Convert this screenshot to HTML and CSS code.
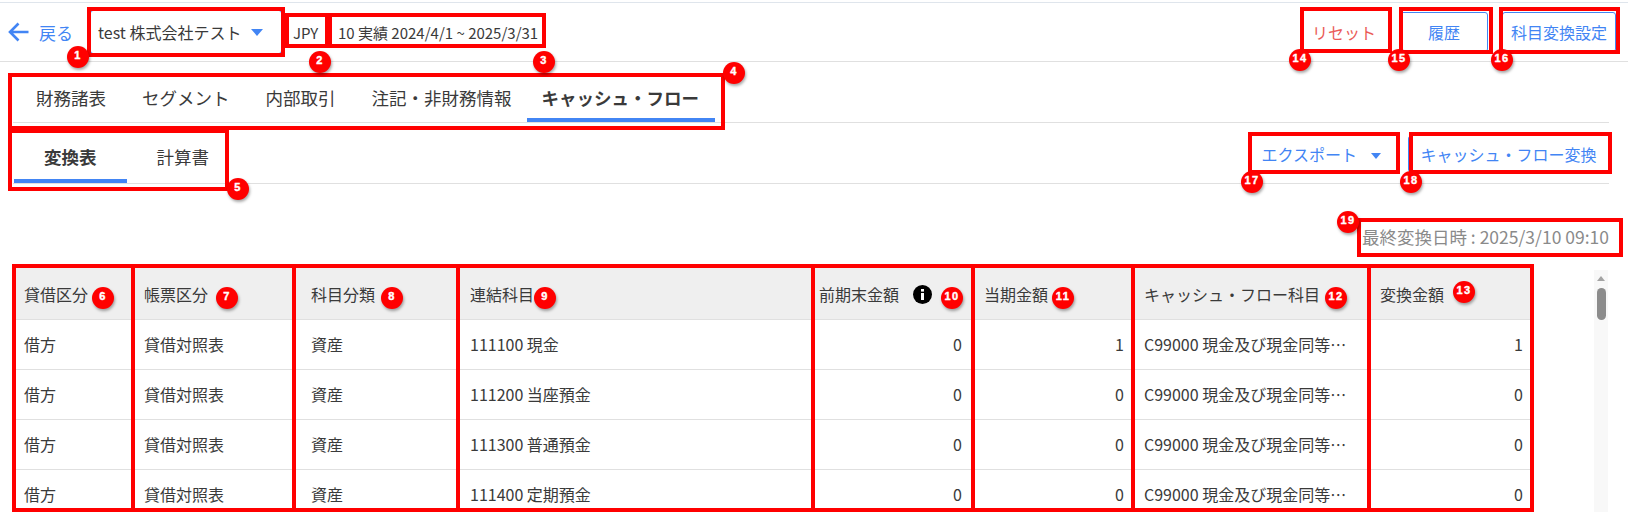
FILE: index.html
```html
<!DOCTYPE html>
<html lang="ja">
<head>
    <meta charset="UTF-8">
    <title>キャッシュ・フロー</title>
    <link rel="stylesheet" href="styles.css">
</head>
<body>
<div class="page">
    <header class="top-bar">
        <a class="back-link">
            <svg class="back-icon" width="21" height="20" viewBox="0 0 21 20"><path d="M20.5 10H2.5M10.5 1.5L2 10l8.5 8.5" fill="none" stroke="#4285f4" stroke-width="2.6"/></svg>
            戻る
        </a>
        <div class="company-select">test 株式会社テスト <span class="caret"></span></div>
        <div class="info-cell currency">JPY</div>
        <div class="info-cell period">10 実績 2024/4/1 ~ 2025/3/31</div>
        <div class="top-actions">
            <button class="btn btn-danger">リセット</button>
            <button class="btn btn-outline btn-history">履歴</button>
            <button class="btn btn-outline btn-mapping">科目変換設定</button>
        </div>
    </header>

    <nav class="tabs">
        <a class="tab">財務諸表</a>
        <a class="tab">セグメント</a>
        <a class="tab">内部取引</a>
        <a class="tab tab-before-active">注記・非財務情報</a>
        <a class="tab tab-active">キャッシュ・フロー</a>
    </nav>

    <div class="sub-tabs">
        <a class="sub-tab sub-tab-active">変換表</a>
        <a class="sub-tab">計算書</a>
        <div class="sub-actions">
            <button class="btn btn-export">エクスポート <span class="caret"></span></button>
            <button class="btn btn-convert">キャッシュ・フロー変換</button>
        </div>
    </div>

    <p class="last-run">最終変換日時 : 2025/3/10 09:10</p>

    <div class="table-area">
        <table class="cf-table">
            <colgroup>
                <col class="w-side"><col class="w-report"><col class="w-group"><col class="w-account">
                <col class="w-amount"><col class="w-amount"><col class="w-cf"><col class="w-total">
            </colgroup>
            <thead>
                <tr>
                    <th class="side-cell">貸借区分</th>
                    <th>帳票区分</th>
                    <th class="group-cell">科目分類</th>
                    <th class="account-cell">連結科目</th>
                    <th class="prev-head">前期末金額
                        <svg class="info-icon" width="19" height="19" viewBox="0 0 19 19"><circle cx="9.5" cy="9.5" r="9.5" fill="#000"/><rect x="8" y="8" width="3" height="7" fill="#fff"/><rect x="8" y="4" width="3" height="2.6" fill="#fff"/></svg>
                    </th>
                    <th>当期金額</th>
                    <th>キャッシュ・フロー科目</th>
                    <th>変換金額</th>
                </tr>
            </thead>
            <tbody>
                <tr>
                    <td class="side-cell">借方</td><td>貸借対照表</td><td class="group-cell">資産</td><td class="account-cell">111100 現金</td>
                    <td class="num">0</td><td class="num num-wide">1</td><td class="cf-name">C99000 現金及び現金同等物期首残高</td><td class="num num-wide">1</td>
                </tr>
                <tr>
                    <td class="side-cell">借方</td><td>貸借対照表</td><td class="group-cell">資産</td><td class="account-cell">111200 当座預金</td>
                    <td class="num">0</td><td class="num num-wide">0</td><td class="cf-name">C99000 現金及び現金同等物期首残高</td><td class="num num-wide">0</td>
                </tr>
                <tr>
                    <td class="side-cell">借方</td><td>貸借対照表</td><td class="group-cell">資産</td><td class="account-cell">111300 普通預金</td>
                    <td class="num">0</td><td class="num num-wide">0</td><td class="cf-name">C99000 現金及び現金同等物期首残高</td><td class="num num-wide">0</td>
                </tr>
                <tr>
                    <td class="side-cell">借方</td><td>貸借対照表</td><td class="group-cell">資産</td><td class="account-cell">111400 定期預金</td>
                    <td class="num">0</td><td class="num num-wide">0</td><td class="cf-name">C99000 現金及び現金同等物期首残高</td><td class="num num-wide">0</td>
                </tr>
            </tbody>
        </table>
        <div class="scroll-track">
            <span class="scroll-up"></span>
            <span class="scroll-thumb"></span>
        </div>
    </div>

    <!-- annotation layer drawn over the screen -->
    <div class="notes">
        <i class="box box-1"></i><i class="box box-2"></i><i class="box box-3"></i><i class="box box-4"></i>
        <i class="box box-5"></i><i class="box box-6"></i><i class="box box-7"></i><i class="box box-8"></i>
        <i class="box box-9"></i><i class="box box-10"></i><i class="box box-11"></i><i class="box box-12"></i>
        <i class="box box-13"></i><i class="box box-14"></i><i class="box box-15"></i><i class="box box-16"></i>
        <i class="box box-17"></i><i class="box box-18"></i><i class="box box-19"></i>

        <b class="badge badge-1">1</b><b class="badge badge-2">2</b><b class="badge badge-3">3</b><b class="badge badge-4">4</b>
        <b class="badge badge-5">5</b><b class="badge badge-6">6</b><b class="badge badge-7">7</b><b class="badge badge-8">8</b>
        <b class="badge badge-9">9</b><b class="badge badge-10">10</b><b class="badge badge-11">11</b><b class="badge badge-12">12</b>
        <b class="badge badge-13">13</b><b class="badge badge-14">14</b><b class="badge badge-15">15</b><b class="badge badge-16">16</b>
        <b class="badge badge-17">17</b><b class="badge badge-18">18</b><b class="badge badge-19">19</b>
    </div>
</div>
</body>
</html>
```

FILE: styles.css
```css
html, body {
    margin: 0;
    padding: 0;
    background-color: #fff;
}

.page {
    position: relative;
    width: 1628px;
    height: 512px;
    overflow: hidden;
    padding-top: 2px;
    box-sizing: border-box;
    font-family: "Noto Sans CJK JP", "Noto Sans", sans-serif;
    font-size: 16px;
    color: #3a3a3a;
}

/* Top bar */
.top-bar {
    display: flex;
    align-items: center;
    height: 58px;
    padding: 0 12px 0 8px;
    border-top: 1px solid #dfe5ec;
    border-bottom: 1px solid #e0e0e0;
}

.back-link {
    display: flex;
    align-items: center;
    gap: 10px;
    width: 82px;
    font-size: 17px;
    color: #4285f4;
}

.company-select {
    display: flex;
    align-items: center;
    box-sizing: border-box;
    width: 192px;
    height: 44px;
    padding-left: 7px;
    border: 1px solid #4285f4;
    border-radius: 3px;
    white-space: pre;
}

.caret {
    display: inline-block;
    width: 0;
    height: 0;
    margin-left: 6px;
    border-left: 6px solid transparent;
    border-right: 6px solid transparent;
    border-top: 7px solid #4285f4;
}

.info-cell {
    font-size: 15px;
}

.currency {
    width: 34px;
    padding-left: 11px;
}

.period {
    padding-left: 11px;
}

.top-actions {
    display: flex;
    gap: 14px;
    margin-left: auto;
}

.btn {
    box-sizing: border-box;
    height: 40px;
    background: #fff;
    border: 1px solid transparent;
    border-radius: 3px;
    font-family: inherit;
    font-size: 16px;
    padding: 0;
    color: #4285f4;
}

.btn-danger {
    width: 84px;
    color: #ea5b57;
}

.btn-outline {
    border-color: #4285f4;
}

.btn-history {
    width: 88px;
}

.btn-mapping {
    width: 114px;
}

/* Tabs */
.tabs {
    display: flex;
    width: 1596px;
    margin: 13px 0 0 13px;
    border-bottom: 1px solid #e0e0e0;
}

.tab {
    box-sizing: border-box;
    height: 47px;
    padding: 0 18px;
    line-height: 45px;
    font-size: 17.5px;
}

.tab:first-child {
    padding-left: 23px;
}

.tab-before-active {
    padding-right: 15px;
}

.tab-active {
    padding: 0 16px 0 15px;
    font-weight: 700;
    border-bottom: 4px solid #4285f4;
}

.sub-tabs {
    display: flex;
    align-items: flex-end;
    width: 1596px;
    height: 60px;
    margin-left: 13px;
    border-bottom: 1px solid #e0e0e0;
}

.sub-tab {
    box-sizing: border-box;
    height: 48px;
    padding: 0 30px;
    line-height: 44px;
    font-size: 17.5px;
}

.sub-tab-active {
    margin-left: 1px;
    font-weight: 700;
    border-bottom: 4px solid #4285f4;
}

.sub-actions {
    display: flex;
    gap: 12px;
    margin: 0 0 11px auto;
}

.btn-export {
    width: 144px;
    height: 36px;
    padding-right: 6px;
}

.btn-export .caret {
    margin-left: 10px;
    vertical-align: 2px;
    border-left-width: 5px;
    border-right-width: 5px;
    border-top-width: 6px;
}

.btn-convert {
    width: 201px;
    height: 36px;
    border-left-color: #4285f4;
}

.last-run {
    margin: 41px 19px 0 0;
    height: 24px;
    line-height: 24px;
    font-size: 17.5px;
    text-align: right;
    color: #8a8a8a;
}

/* Table */
.table-area {
    display: flex;
    margin-top: 18px;
    padding-left: 14px;
    height: 245px;
}

.cf-table {
    width: 1518px;
    height: 0;
    border-collapse: collapse;
    table-layout: fixed;
    font-size: 16px;
}

.w-side { width: 119px; }
.w-report { width: 161px; }
.w-group { width: 164px; }
.w-account { width: 355px; }
.w-amount { width: 160px; }
.w-cf { width: 236px; }
.w-total { width: 163px; }

.cf-table th, .cf-table td {
    box-sizing: border-box;
    padding: 0 11px;
    text-align: left;
    font-weight: 400;
    white-space: nowrap;
    overflow: hidden;
    border-bottom: 1px solid #e0e0e0;
}

.cf-table th {
    height: 52px;
    padding-top: 2px;
    background-color: #efefef;
}

.cf-table td {
    height: 50px;
}

.cf-table .side-cell {
    padding-left: 10px;
}

.cf-table .group-cell {
    padding-left: 17px;
}

.cf-table .account-cell {
    padding-left: 12px;
}

.cf-table .prev-head {
    padding-left: 6px;
}

.info-icon {
    margin-left: 10px;
    vertical-align: -3px;
}

.cf-table .num {
    text-align: right;
}

.cf-table .num-wide {
    padding-right: 9px;
}

.cf-table .cf-name {
    text-overflow: ellipsis;
    padding-right: 20px;
}

/* Scrollbar */
.scroll-track {
    position: relative;
    box-sizing: border-box;
    width: 14px;
    margin: 3px 0 0 62px;
    padding-top: 6px;
    background-color: #f8f8f8;
}

.scroll-up {
    display: block;
    width: 0;
    height: 0;
    margin: 0 auto;
    border-left: 4.5px solid transparent;
    border-right: 4.5px solid transparent;
    border-bottom: 5px solid #a3a3a3;
}

.scroll-thumb {
    display: block;
    width: 9px;
    height: 32px;
    margin: 7px auto 0;
    background-color: #8c8c8c;
    border-radius: 5px;
}

/* Annotations */
.notes {
    position: absolute;
    top: 0;
    left: 0;
    width: 100%;
    height: 100%;
}

.box {
    position: absolute;
    box-sizing: border-box;
    border: 4px solid #f00;
}

.box-1 { left: 87px; top: 7px; width: 198px; height: 50px; }
.box-2 { left: 285px; top: 13px; width: 44px; height: 35px; }
.box-3 { left: 328px; top: 13px; width: 218px; height: 35px; }
.box-4 { left: 8px; top: 73px; width: 717px; height: 57px; }
.box-5 { left: 8px; top: 129px; width: 221px; height: 62px; }
.box-6 { left: 12px; top: 264px; width: 123px; height: 248px; }
.box-7 { left: 131px; top: 264px; width: 165px; height: 248px; }
.box-8 { left: 292px; top: 264px; width: 168px; height: 248px; }
.box-9 { left: 456px; top: 264px; width: 359px; height: 248px; }
.box-10 { left: 811px; top: 264px; width: 164px; height: 248px; }
.box-11 { left: 971px; top: 264px; width: 164px; height: 248px; }
.box-12 { left: 1131px; top: 264px; width: 240px; height: 248px; }
.box-13 { left: 1367px; top: 264px; width: 167px; height: 248px; }
.box-14 { left: 1300px; top: 7px; width: 92px; height: 46px; }
.box-15 { left: 1399px; top: 7px; width: 94px; height: 47px; }
.box-16 { left: 1499px; top: 7px; width: 121px; height: 47px; }
.box-17 { left: 1248px; top: 132px; width: 152px; height: 42px; }
.box-18 { left: 1409px; top: 132px; width: 203px; height: 42px; }
.box-19 { left: 1357px; top: 218px; width: 266px; height: 39px; }

.badge {
    position: absolute;
    width: 22px;
    height: 22px;
    margin: -11px 0 0 -11px;
    border-radius: 50%;
    background-color: #f00;
    color: #fff;
    font-family: "Liberation Sans", sans-serif;
    font-size: 11px;
    font-weight: 700;
    line-height: 19px;
    letter-spacing: 1.5px;
    text-align: center;
    -webkit-text-stroke: 0.4px #fff;
    box-shadow: 1px 2px 3px rgba(0, 0, 0, 0.35);
}

.badge-1 { left: 78px; top: 57px; }
.badge-2 { left: 320px; top: 62px; }
.badge-3 { left: 544px; top: 62px; }
.badge-4 { left: 734px; top: 73px; }
.badge-5 { left: 238px; top: 189px; }
.badge-6 { left: 103px; top: 298px; }
.badge-7 { left: 227px; top: 298px; }
.badge-8 { left: 392px; top: 298px; }
.badge-9 { left: 545px; top: 298px; }
.badge-10 { left: 952px; top: 298px; }
.badge-11 { left: 1063px; top: 298px; }
.badge-12 { left: 1336px; top: 298px; }
.badge-13 { left: 1464px; top: 292px; }
.badge-14 { left: 1300px; top: 60px; }
.badge-15 { left: 1399px; top: 60px; }
.badge-16 { left: 1502px; top: 60px; }
.badge-17 { left: 1252px; top: 182px; }
.badge-18 { left: 1411px; top: 182px; }
.badge-19 { left: 1348px; top: 222px; }
```
